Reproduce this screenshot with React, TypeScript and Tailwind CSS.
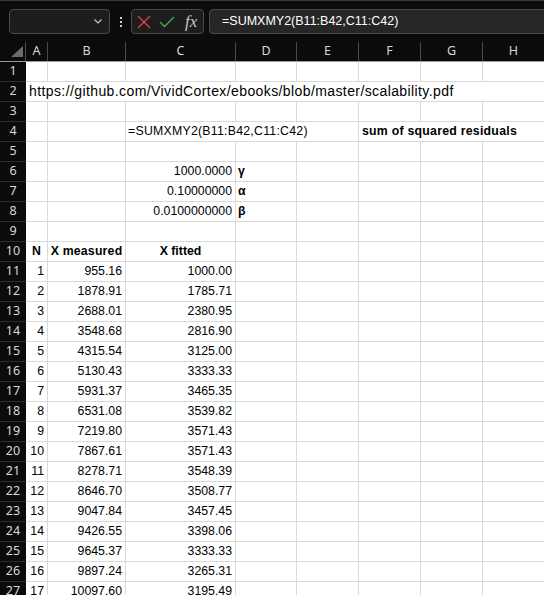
import React from "react";

type Cell = { c: number; span?: number; text: string; align?: "l" | "r" | "c"; bold?: boolean; cls?: string };

const SPAN: Record<number, string> = {
  1: "col-span-1",
  2: "col-span-2",
  3: "col-span-3",
  8: "col-span-8",
};

const data: [string, string, string][] = [
  ["1", "955.16", "1000.00"],
  ["2", "1878.91", "1785.71"],
  ["3", "2688.01", "2380.95"],
  ["4", "3548.68", "2816.90"],
  ["5", "4315.54", "3125.00"],
  ["6", "5130.43", "3333.33"],
  ["7", "5931.37", "3465.35"],
  ["8", "6531.08", "3539.82"],
  ["9", "7219.80", "3571.43"],
  ["10", "7867.61", "3571.43"],
  ["11", "8278.71", "3548.39"],
  ["12", "8646.70", "3508.77"],
  ["13", "9047.84", "3457.45"],
  ["14", "9426.55", "3398.06"],
  ["15", "9645.37", "3333.33"],
  ["16", "9897.24", "3265.31"],
  ["17", "10097.60", "3195.49"],
];

const rows: Cell[][] = [
  [],
  [
    {
      c: 0,
      span: 8,
      text: "https://github.com/VividCortex/ebooks/blob/master/scalability.pdf",
      cls: "text-[14px] tracking-[0.4px] pl-[3px]",
    },
  ],
  [],
  [
    { c: 2, span: 3, text: "=SUMXMY2(B11:B42,C11:C42)", cls: "tracking-[0.25px]" },
    { c: 5, span: 3, text: "sum of squared residuals", bold: true, cls: "tracking-[0.25px] pl-[3px]" },
  ],
  [],
  [
    { c: 2, text: "1000.0000", align: "r" },
    { c: 3, text: "γ", bold: true },
  ],
  [
    { c: 2, text: "0.10000000", align: "r" },
    { c: 3, text: "α", bold: true },
  ],
  [
    { c: 2, text: "0.0100000000", align: "r" },
    { c: 3, text: "β", bold: true },
  ],
  [],
  [
    { c: 0, text: "N", align: "c", bold: true },
    { c: 1, text: "X measured", align: "c", bold: true, cls: "tracking-[0.2px]" },
    { c: 2, text: "X fitted", align: "c", bold: true },
  ],
  ...data.map(([n, m, f]) => [
    { c: 0, text: n, align: "r" as const },
    { c: 1, text: m, align: "r" as const },
    { c: 2, text: f, align: "r" as const },
  ]),
];

function fillRow(cells: Cell[]): Cell[] {
  const out: Cell[] = [];
  let i = 0;
  while (i < 8) {
    const found = cells.find((x) => x.c === i);
    if (found) {
      out.push(found);
      i += found.span ?? 1;
    } else {
      out.push({ c: i, text: "" });
      i += 1;
    }
  }
  return out;
}

function DataCell({ cell }: { cell: Cell }) {
  const span = SPAN[cell.span ?? 1];
  const align =
    cell.align === "r" ? "justify-end pr-[3px]" : cell.align === "c" ? "justify-center" : "justify-start pl-[2px]";
  return (
    <div
      className={`${span} h-[20px] border-r border-b border-[#d9d9d9] flex items-center whitespace-nowrap overflow-hidden text-black text-[12.3px] ${align} ${
        cell.bold ? "font-bold" : ""
      } ${cell.cls ?? ""}`}
    >
      {cell.text}
    </div>
  );
}

const HEAD = ["A", "B", "C", "D", "E", "F", "G", "H"];

export default function App() {
  return (
    <div className="w-[544px] h-[595px] overflow-hidden bg-white">
      {/* toolbar */}
      <div className="h-[42px] bg-[#0b0b0b] border-t border-[#3a3a3a] flex items-start pt-[8px] pl-[9px] overflow-hidden">
        <div className="shrink-0 w-[101px] h-[25px] rounded-[4px] border border-[#4a4a4a] bg-[#1d1d1d] flex items-center justify-end pr-[7px]">
          <svg width="8" height="5" viewBox="0 0 8 5">
            <polyline points="0.5,0.5 4,4 7.5,0.5" fill="none" stroke="#cfcfcf" strokeWidth="1.1" />
          </svg>
        </div>
        <div className="shrink-0 ml-[10px] w-[2px] h-[25px] flex flex-col items-center justify-center gap-[2px]">
          <div className="w-[2px] h-[2px] bg-[#d0d0d0]" />
          <div className="w-[2px] h-[2px] bg-[#d0d0d0]" />
          <div className="w-[2px] h-[2px] bg-[#d0d0d0]" />
        </div>
        <div className="shrink-0 ml-[9px] w-[73px] h-[25px] rounded-[4px] border border-[#4a4a4a] bg-[#1d1d1d] flex items-center pl-[5px]">
          <svg width="14" height="14" viewBox="0 0 14 14">
            <line x1="1" y1="1" x2="13" y2="13" stroke="#e0434b" strokeWidth="1.3" />
            <line x1="13" y1="1" x2="1" y2="13" stroke="#e0434b" strokeWidth="1.3" />
          </svg>
          <svg width="16" height="12" viewBox="0 0 16 12" className="ml-[8px]">
            <polyline points="1,6 5.5,10.5 15,1" fill="none" stroke="#3fae4f" strokeWidth="1.3" />
          </svg>
          <span className="ml-[10px] font-['Liberation_Serif',serif] italic text-[17px] leading-none text-[#c4c4c4]">
            fx
          </span>
        </div>
        <div className="shrink-0 ml-[5px] w-[400px] h-[25px] rounded-[4px] border border-[#4a4a4a] bg-[#262626] flex items-center pl-[12px] font-['Liberation_Sans',Arial,sans-serif] text-[12.5px] text-white">
          =SUMXMY2(B11:B42,C11:C42)
        </div>
      </div>

      {/* column header */}
      <div className="grid grid-cols-[26px_22px_78px_110px_61px_62px_62px_62px_62px] h-[20px] bg-[#0b0b0b] border-b border-[#9a9a9a] font-['Noto_Sans',sans-serif] text-[12.5px] text-[#d8d8d8]">
        <div className="relative border-r border-[#4a4a4a]">
          <svg width="26" height="19" viewBox="0 0 26 19" className="absolute left-0 top-0">
            <polygon points="11,15 23,15 23,4" fill="#6b6b6b" />
          </svg>
        </div>
        {HEAD.map((h) => (
          <div key={h} className="border-r border-[#4a4a4a] flex items-center justify-center">
            {h}
          </div>
        ))}
      </div>

      {/* rows */}
      <div className="font-['Liberation_Sans',Arial,sans-serif]">
        {rows.map((r, i) => (
          <div key={i} className="grid grid-cols-[26px_22px_78px_110px_61px_62px_62px_62px_62px] h-[20px]">
            <div className="h-[20px] bg-[#0b0b0b] border-b border-[#2c2c2c] flex items-center justify-center font-['Noto_Sans',sans-serif] text-[12.5px] text-[#d8d8d8]">
              {i + 1}
            </div>
            {fillRow(r).map((cell) => (
              <DataCell key={cell.c} cell={cell} />
            ))}
          </div>
        ))}
      </div>
    </div>
  );
}
